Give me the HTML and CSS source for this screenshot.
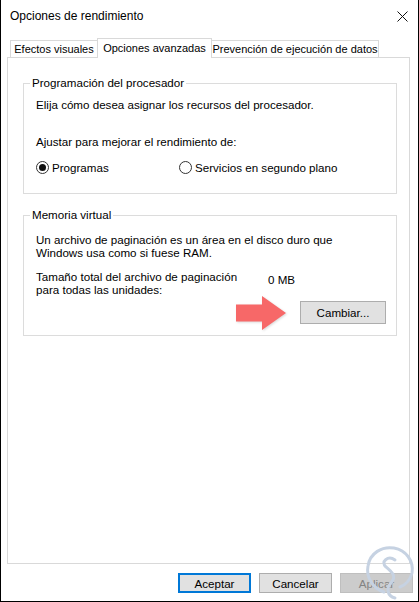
FILE: index.html
```html
<!DOCTYPE html>
<html lang="es">
<head>
  <meta charset="UTF-8">
  <meta name="viewport" content="width=device-width, initial-scale=1.0">
  <title>Opciones de rendimiento</title>
  <link rel="stylesheet" href="styles.css">
</head>
<body>
  <div class="window">
    <div class="titlebar">
      <span class="title">Opciones de rendimiento</span>
      <svg class="close" width="11" height="11" viewBox="0 0 11 11">
        <path d="M0.5 0.5L10.5 10.5M10.5 0.5L0.5 10.5" stroke="#111" stroke-width="1" fill="none"/>
      </svg>
    </div>

    <div class="tabs">
      <div class="tab tab-visual">Efectos visuales</div>
      <div class="tab tab-advanced active">Opciones avanzadas</div>
      <div class="tab tab-dep">Prevención de ejecución de datos</div>
    </div>

    <div class="panel">
      <fieldset class="group cpu">
        <legend>Programación del procesador</legend>
        <p class="line">Elija cómo desea asignar los recursos del procesador.</p>
        <p class="line adjust">Ajustar para mejorar el rendimiento de:</p>
        <div class="radios">
          <label class="radio radio-programs"><span class="dot checked"></span>Programas</label>
          <label class="radio"><span class="dot"></span>Servicios en segundo plano</label>
        </div>
      </fieldset>

      <fieldset class="group memory">
        <legend>Memoria virtual</legend>
        <p class="text">Un archivo de paginación es un área en el disco duro que<br>Windows usa como si fuese RAM.</p>
        <div class="size-row">
          <p class="text size-label">Tamaño total del archivo de paginación<br>para todas las unidades:</p>
          <span class="size-value">0 MB</span>
        </div>
        <div class="change-row">
          <svg class="arrow" width="50" height="34" viewBox="0 0 50 34">
            <polygon points="0,8.5 26,8.5 26,0 50,17 26,34 26,25.5 0,25.5" fill="#f76868"/>
          </svg>
          <button class="btn btn-change">Cambiar...</button>
        </div>
      </fieldset>
    </div>

    <div class="footer">
      <button class="btn btn-default">Aceptar</button>
      <button class="btn">Cancelar</button>
      <button class="btn" disabled>Aplicar</button>
    </div>

    <!-- watermark of the capture -->
    <svg class="watermark" width="56" height="62" viewBox="0 0 56 62">
      <path d="M22 52 C10 48 4 37 6 26 C8 13 20 6 32 8 C44 10 52 21 50 33 C48 41 43 45 38 47"
            fill="none" stroke="#c6d2e2" stroke-width="3" stroke-linecap="round"/>
      <path d="M33 20 C26 15 18 22 24 27 C30 32 35 36 29 43 C24 48 25 56 33 58"
            fill="none" stroke="#c6d2e2" stroke-width="3" stroke-linecap="round"/>
    </svg>
  </div>
</body>
</html>
```

FILE: styles.css
```css
* {
  box-sizing: border-box;
}

body {
  margin: 0;
  background: #fff;
  font-family: "Liberation Sans", Arial, sans-serif;
  font-size: 11.6px;
  color: #000;
}

.window {
  position: relative;
  width: 419px;
  height: 602px;
  display: flex;
  flex-direction: column;
  background: #fff;
  border-left: 1px solid #000;
  border-right: 1px solid #000;
  border-bottom: 1px solid #000;
  overflow: hidden;
}

.titlebar {
  height: 38px;
  flex: none;
  display: flex;
  align-items: flex-start;
  justify-content: space-between;
  padding: 8px 10px 0 9px;
}

.title {
  font-size: 12px;
  line-height: 16px;
}

.close {
  margin-top: 3px;
}

/* tabs */
.tabs {
  flex: none;
  display: flex;
  align-items: flex-end;
  height: 19px;
  padding-left: 9px;
  position: relative;
  z-index: 1;
  font-size: 11px;
}

.tab {
  height: 17px;
  border: 1px solid #d9d9d9;
  border-bottom: none;
  background: #fff;
  line-height: 16px;
  text-align: center;
  white-space: nowrap;
}

.tab-visual {
  width: 88px;
}

.tab-advanced {
  width: 115px;
  margin-left: -1px;
}

.tab-dep {
  width: 168px;
  margin-left: -1px;
}

.tab.active {
  height: 20px;
  margin-bottom: -1px;
  padding-top: 1px;
  position: relative;
  z-index: 2;
}

/* tab page */
.panel {
  flex: 1;
  margin: 0 8px 0 6px;
  border: 1px solid #d9d9d9;
}

.group {
  margin: 17px 12px 0 15px;
  padding: 7px 10px 18px 12px;
  border: 1px solid #dcdcdc;
  min-inline-size: 0;
}

.group legend {
  margin-left: -6px;
  padding: 0 2px;
  line-height: 16px;
}

.memory {
  margin-top: 13px;
  padding-top: 10px;
  padding-bottom: 6px;
}

.line {
  margin: 0;
  line-height: 14px;
}

.adjust {
  margin-top: 23px;
}

.radios {
  display: flex;
  margin-top: 10px;
  height: 16px;
  align-items: center;
}

.radio {
  display: flex;
  align-items: center;
  gap: 3px;
}

.radio-programs {
  width: 143px;
}

.dot {
  width: 13px;
  height: 13px;
  border: 1px solid #333;
  border-radius: 50%;
  display: flex;
  align-items: center;
  justify-content: center;
}

.dot.checked::after {
  content: "";
  width: 7px;
  height: 7px;
  border-radius: 50%;
  background: #111;
}

.text {
  margin: 0;
  line-height: 13px;
}

.size-row {
  display: flex;
  margin-top: 11px;
}

.size-label {
  width: 232px;
}

.size-value {
  padding-top: 3px;
  line-height: 13px;
}

.change-row {
  display: flex;
  justify-content: flex-end;
  align-items: center;
  gap: 14px;
  height: 33px;
}

.arrow {
  filter: drop-shadow(1px 1px 1px rgba(0, 0, 0, 0.15));
}

/* buttons */
.btn {
  font-family: inherit;
  font-size: 11.6px;
  color: #000;
  background: #e1e1e1;
  border: 1px solid #adadad;
  padding: 0;
  height: 20px;
  width: 73px;
}

.btn-change {
  width: 86px;
  height: 23px;
}

.btn-default {
  border: 2px solid #0078d7;
}

.btn:disabled {
  background: #cccccc;
  border-color: #bfbfbf;
  color: #838383;
}

.footer {
  flex: none;
  display: flex;
  justify-content: flex-end;
  gap: 8px;
  padding: 9px 5px 8px 0;
}

.watermark {
  position: absolute;
  right: 0;
  bottom: -1px;
}
```
